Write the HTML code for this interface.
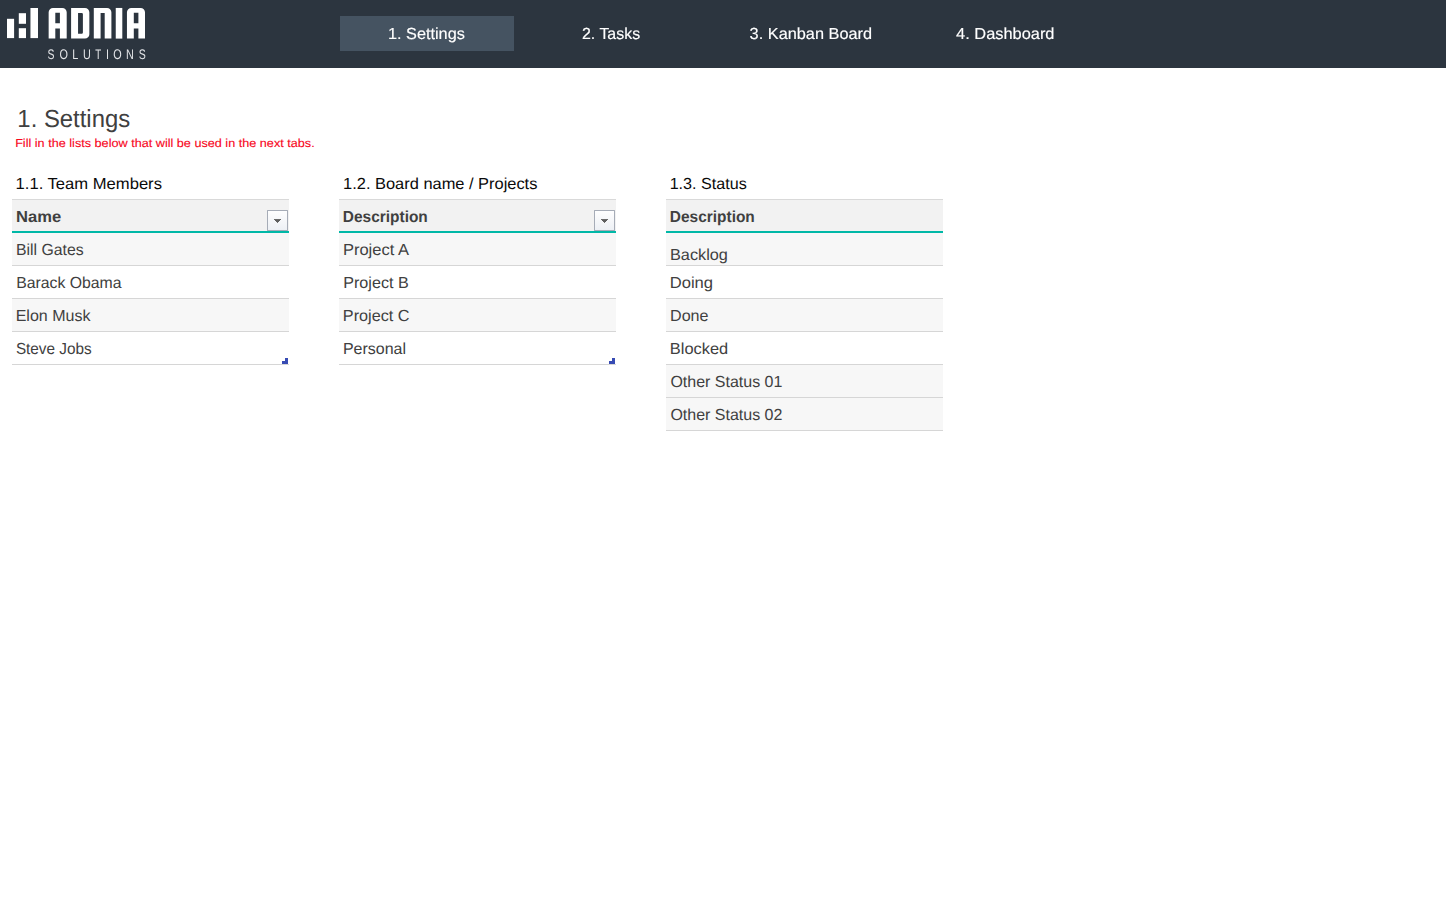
<!DOCTYPE html>
<html lang="en">
<head>
<meta charset="utf-8">
<title>1. Settings - Adnia Solutions Kanban</title>
<style>
*{box-sizing:border-box;margin:0;padding:0}
html,body{width:1446px;height:915px;overflow:hidden;background:#fff}
body{font-family:"Liberation Sans",sans-serif;position:relative;color:#404040;text-rendering:geometricPrecision}
.t{position:absolute;white-space:nowrap;line-height:1;transform-origin:0 0;display:block;font-weight:normal;text-decoration:none}
/* ---------- top bar ---------- */
#topbar{position:absolute;left:0;top:0;width:1446px;height:68px;background:#2c353f}
#logo{position:absolute;left:0;top:0}
#tab-active{position:absolute;left:340px;top:16px;width:174px;height:35px;background:#455361}
.nav{font-size:16px;color:#fff;-webkit-text-stroke:.15px #fff}
/* ---------- headings ---------- */
#title{font-size:24.7px;color:#404040}
#hint{font-size:11.6px;color:#f8061c;-webkit-text-stroke:.12px #f8061c}
.sec{font-size:16px;color:#0a0a0a}
/* ---------- tables ---------- */
.tbl{position:absolute;top:199px;width:277px;border-top:1px solid #d9d9d9}
.tbl .hd{position:relative;height:33px;background:#f2f2f2;border-bottom:2px solid #00b8a7}
.tbl .row{position:relative;height:33px;border-bottom:1px solid #d6d6d6;background:#fff}
.tbl .row.g{background:#f7f7f7}
.tbl .t{font-size:16px;color:#404040}
.tbl .hd .t{font-weight:bold}
.fbtn{position:absolute;left:255px;top:10px;width:21px;height:21px;border:1px solid #a6acb7;border-radius:.5px;background:linear-gradient(#fefefe,#edf0f5)}
.fbtn:after{content:"";position:absolute;left:6px;top:8px;width:7px;height:4px;background:linear-gradient(#6a6a6a,#6a6a6a) 0 0/7px 1px no-repeat,linear-gradient(#5e5e5e,#5e5e5e) 1px 1px/5px 1px no-repeat,linear-gradient(#5e5e5e,#5e5e5e) 2px 2px/3px 1px no-repeat,linear-gradient(#707070,#707070) 3px 3px/1px 1px no-repeat}
.grip{position:absolute;right:1px;bottom:0;width:6px;height:6px}
.grip:before{content:"";position:absolute;right:0;top:0;width:3px;height:6px;background:#374bb3}
.grip:after{content:"";position:absolute;left:0;bottom:0;width:6px;height:3px;background:#374bb3}
#logo,#nav{will-change:transform}
</style>
</head>
<body>
<header id="topbar">
  <svg id="logo" width="160" height="68" viewBox="0 0 160 68" role="img" aria-label="ADNIA Solutions">
    <g fill="#ffffff">
      <rect x="7" y="18.8" width="7.1" height="19.3"/>
      <rect x="18.8" y="13.2" width="7.2" height="10.6"/>
      <rect x="18.8" y="28.2" width="7.2" height="9.9"/>
      <rect x="30.45" y="8" width="7.55" height="30.1"/>
      <path fill-rule="evenodd" d="M48.65 38.55V12.3a4.35 4.35 0 0 1 4.35 -4.35H62.35a4.35 4.35 0 0 1 4.35 4.35V38.55H59.9V28.45H55.3V38.55ZM55.3 12.85H59.9V23.3H55.3Z"/>
      <path fill-rule="evenodd" d="M71.1 7.95H84.95a4.4 4.4 0 0 1 4.4 4.4V34.15a4.4 4.4 0 0 1 -4.4 4.4H71.1Z M78.05 12.9H81.7a1.2 1.2 0 0 1 1.2 1.2V32.6a1.2 1.2 0 0 1 -1.2 1.2H78.05Z"/>
      <path d="M93.8 38.6V7.95H107a4.4 4.4 0 0 1 4.4 4.4V38.6H104.7V13.05H100.6V38.6Z"/>
      <rect x="115.75" y="7.95" width="6.55" height="30.65"/>
      <path fill-rule="evenodd" d="M126.95 38.55V12.3a4.35 4.35 0 0 1 4.35 -4.35H140.65a4.35 4.35 0 0 1 4.35 4.35V38.55H138.4V28.45H133.8V38.55ZM133.8 12.85H138.4V23.3H133.8Z"/>
    </g>
    <g fill="#e3e5e8" font-family="Liberation Sans, sans-serif" font-size="13.9">
      <text class="sl" transform="translate(51.00 59) scale(0.750 1)" text-anchor="middle">S</text>
      <text class="sl" transform="translate(63.60 59) scale(0.780 1)" text-anchor="middle">O</text>
      <text class="sl" transform="translate(75.30 59) scale(0.780 1)" text-anchor="middle">L</text>
      <text class="sl" transform="translate(86.90 59) scale(0.780 1)" text-anchor="middle">U</text>
      <text class="sl" transform="translate(98.20 59) scale(0.700 1)" text-anchor="middle">T</text>
      <text class="sl" transform="translate(107.50 59) scale(0.780 1)" text-anchor="middle">I</text>
      <text class="sl" transform="translate(117.40 59) scale(0.780 1)" text-anchor="middle">O</text>
      <text class="sl" transform="translate(129.90 59) scale(0.780 1)" text-anchor="middle">N</text>
      <text class="sl" transform="translate(142.20 59) scale(0.760 1)" text-anchor="middle">S</text>
    </g>
  </svg>
  <nav id="nav">
    <div id="tab-active"></div>
    <a class="t nav" id="n1" style="left:387px;top:27px;transform:translateX(0.98px) scaleX(1.0165)">1. Settings</a>
    <a class="t nav" id="n2" style="left:581px;top:27px;transform:translateX(0.99px) scaleX(0.9949)">2. Tasks</a>
    <a class="t nav" id="n3" style="left:749px;top:27px;transform:translateX(0.62px) scaleX(1.0192)">3. Kanban Board</a>
    <a class="t nav" id="n4" style="left:956px;top:27px;transform:translateX(0.09px) scaleX(1.024)">4. Dashboard</a>
  </nav>
</header>

<main>
  <h1 class="t" id="title" style="left:17px;top:108px;transform:translateX(0.36px) scaleX(0.9666)">1. Settings</h1>
  <p class="t" id="hint" style="left:15px;top:138px;transform:translateX(0.14px) scaleX(1.0911)">Fill in the lists below that will be used in the next tabs.</p>

  <h2 class="t sec" id="s1" style="left:15px;top:177px;transform:translateX(0.57px) scaleX(1.0374)">1.1. Team Members</h2>
  <h2 class="t sec" id="s2" style="left:343px;top:177px;transform:translateX(0.12px) scaleX(1.0255)">1.2. Board name / Projects</h2>
  <h2 class="t sec" id="s3" style="left:669px;top:177px;transform:translateX(0.65px) scaleX(1.0071)">1.3. Status</h2>

  <section class="tbl" id="t1" style="left:12px">
    <div class="hd"><span class="t" id="t1-h" style="left:4px;top:10px;transform:translateX(0.02px) scaleX(1.0346)">Name</span><div class="fbtn"></div></div>
    <div class="row g"><span class="t" id="t1-r1" style="left:3px;top:10px;transform:translateX(0.97px) scaleX(0.9872)">Bill Gates</span></div>
    <div class="row"><span class="t" id="t1-r2" style="left:4px;top:10px;transform:translateX(0.17px) scaleX(0.9872)">Barack Obama</span></div>
    <div class="row g"><span class="t" id="t1-r3" style="left:3px;top:10px;transform:translateX(0.67px) scaleX(1.0009)">Elon Musk</span></div>
    <div class="row"><span class="t" id="t1-r4" style="left:3px;top:10px;transform:translateX(0.89px) scaleX(0.9566)">Steve Jobs</span><div class="grip"></div></div>
  </section>

  <section class="tbl" id="t2" style="left:339px">
    <div class="hd"><span class="t" id="t2-h" style="left:3px;top:10px;transform:translateX(0.85px) scaleX(0.965)">Description</span><div class="fbtn"></div></div>
    <div class="row g"><span class="t" id="t2-r1" style="left:3px;top:10px;transform:translateX(0.93px) scaleX(1.0306)">Project A</span></div>
    <div class="row"><span class="t" id="t2-r2" style="left:4px;top:10px;transform:translateX(0.22px) scaleX(1.0083)">Project B</span></div>
    <div class="row g"><span class="t" id="t2-r3" style="left:3px;top:10px;transform:translateX(0.87px) scaleX(1.0126)">Project C</span></div>
    <div class="row"><span class="t" id="t2-r4" style="left:3px;top:10px;transform:translateX(0.92px) scaleX(0.9979)">Personal</span><div class="grip"></div></div>
  </section>

  <section class="tbl" id="t3" style="left:666px">
    <div class="hd"><span class="t" id="t3-h" style="left:3px;top:10px;transform:translateX(0.85px) scaleX(0.965)">Description</span></div>
    <div class="row g"><span class="t" id="t3-r1" style="left:4px;top:15px;transform:translateX(0.01px) scaleX(1.0162)">Backlog</span></div>
    <div class="row"><span class="t" id="t3-r2" style="left:3px;top:10px;transform:translateX(0.73px) scaleX(1.0357)">Doing</span></div>
    <div class="row g"><span class="t" id="t3-r3" style="left:4px;top:10px;transform:translateX(0.02px) scaleX(1.0062)">Done</span></div>
    <div class="row"><span class="t" id="t3-r4" style="left:3px;top:10px;transform:translateX(0.86px) scaleX(1.0246)">Blocked</span></div>
    <div class="row g"><span class="t" id="t3-r5" style="left:4px;top:10px;transform:translateX(0.38px) scaleX(0.9994)">Other Status 01</span></div>
    <div class="row g"><span class="t" id="t3-r6" style="left:4px;top:10px;transform:translateX(0.39px) scaleX(0.9996)">Other Status 02</span></div>
  </section>
</main>
</body>
</html>
